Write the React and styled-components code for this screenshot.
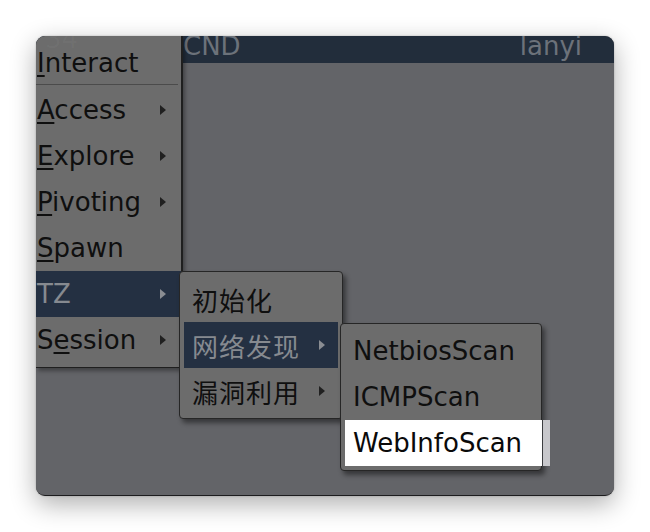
import React from 'react';
import styled, { createGlobalStyle, css } from 'styled-components';

const Global = createGlobalStyle`
  html, body { margin: 0; padding: 0; background: #ffffff; }
  body {
    width: 650px; height: 532px; overflow: hidden;
    font-family: "DejaVu Sans", "Noto Sans CJK SC", sans-serif;
  }
`;

const Stage = styled.div`
  width: 650px;
  height: 532px;
  box-sizing: border-box;
  padding: 36px 36px 0 36px;
`;

const Window = styled.div`
  position: relative;
  width: 578px;
  height: 460px;
  box-sizing: border-box;
  border-radius: 9px;
  overflow: hidden;
  background: #636468;
  border-bottom: 1px solid #1c1c1e;
  box-shadow: 0 8px 26px rgba(0, 0, 0, 0.32), 0 0 2px rgba(0, 0, 0, 0.25);
  display: flex;
  flex-direction: column;
`;

const TopBar = styled.div`
  height: 27px;
  flex: none;
  background: #222d3b;
  display: flex;
  justify-content: space-between;
  align-items: flex-start;
  padding: 0 32px 0 147px;
  color: #6c727a;
  font-size: 26px;
  line-height: 21px;
`;

const Body = styled.div`
  flex: 1;
`;

const Menu = styled.div`
  position: absolute;
  box-sizing: border-box;
  background: #6c6c6c;
  color: #0f0f0f;
  font-size: 26px;
`;

const MainMenu = styled(Menu)`
  left: 0;
  top: 0;
  width: 147px;
  padding: 2px 0 4px;
  border-right: 2px solid #1f1f1f;
  border-bottom: 1px solid #1f1f1f;
  box-shadow: 2px 3px 4px rgba(0, 0, 0, 0.35);
`;

const SubMenu = styled(Menu)`
  left: ${(p) => p.$x}px;
  top: ${(p) => p.$y}px;
  width: ${(p) => p.$w}px;
  padding: 4px;
  border: 1px solid #262626;
  border-radius: 4px;
  box-shadow: 3px 4px 5px rgba(0, 0, 0, 0.45);
`;

const Ghost = styled.span`
  position: absolute;
  left: 9px;
  top: -12px;
  font-size: 26px;
  color: rgba(255, 255, 255, 0.035);
`;

const Row = styled.div`
  position: relative;
  height: 46px;
  box-sizing: border-box;
  display: flex;
  align-items: center;
  justify-content: space-between;
  padding: ${(p) => (p.$sub ? '0 13px 0 8px' : '0 15px 0 1px')};
  white-space: nowrap;
  ${(p) => p.$first && css`padding-top: 4px;`}
  ${(p) =>
    p.$active &&
    css`
      background: #243042;
      color: #868a90;
    `}
  ${(p) =>
    p.$selected &&
    css`
      background: #ffffff;
      color: #0a0a0a;
      margin-right: -5px;
      &::after {
        content: '';
        position: absolute;
        top: 0;
        bottom: 0;
        left: calc(100% + 1px);
        width: 7px;
        background: #c8c8cc;
      }
    `}
`;

const Label = styled.span`
  letter-spacing: ${(p) => (p.$cjk ? '1px' : '0')};
`;

const Mn = styled.span`
  text-decoration: underline;
  text-decoration-thickness: 2px;
  text-underline-offset: 3px;
`;

const Arrow = styled.span`
  width: 0;
  height: 0;
  border-top: 5px solid transparent;
  border-bottom: 5px solid transparent;
  border-left: 6px solid ${(p) => (p.$light ? '#8a8d92' : '#202020')};
`;

const Separator = styled.div`
  height: 1px;
  background: #4b4b4b;
  margin: 0 3px 2px 0;
`;

const mainItems = [
  { pre: '', mn: 'A', post: 'ccess', arrow: true },
  { pre: '', mn: 'E', post: 'xplore', arrow: true },
  { pre: '', mn: 'P', post: 'ivoting', arrow: true },
  { pre: '', mn: 'S', post: 'pawn', arrow: false },
  { pre: 'TZ', mn: '', post: '', arrow: true, active: true },
  { pre: 'S', mn: 'e', post: 'ssion', arrow: true },
];

const tzItems = [
  { label: '初始化', arrow: false },
  { label: '网络发现', arrow: true, active: true },
  { label: '漏洞利用', arrow: true },
];

const scanItems = [
  { label: 'NetbiosScan' },
  { label: 'ICMPScan' },
  { label: 'WebInfoScan', selected: true },
];

export default function App() {
  return (
    <>
      <Global />
      <Stage>
        <Window>
          <TopBar>
            <span>CND</span>
            <span>lanyi</span>
          </TopBar>
          <Body />

          <MainMenu>
            <Ghost>34</Ghost>
            <Row $first>
              <Label>
                <Mn>I</Mn>nteract
              </Label>
            </Row>
            <Separator />
            {mainItems.map((it, i) => (
              <Row key={i} $active={it.active}>
                <Label>
                  {it.pre}
                  {it.mn && <Mn>{it.mn}</Mn>}
                  {it.post}
                </Label>
                {it.arrow && <Arrow $light={it.active} />}
              </Row>
            ))}
          </MainMenu>

          <SubMenu $x={143} $y={235} $w={164}>
            {tzItems.map((it, i) => (
              <Row key={i} $sub $active={it.active}>
                <Label $cjk>{it.label}</Label>
                {it.arrow && <Arrow $light={it.active} />}
              </Row>
            ))}
          </SubMenu>

          <SubMenu $x={304} $y={287} $w={202}>
            {scanItems.map((it, i) => (
              <Row key={i} $sub $selected={it.selected}>
                <Label>{it.label}</Label>
              </Row>
            ))}
          </SubMenu>
        </Window>
      </Stage>
    </>
  );
}
